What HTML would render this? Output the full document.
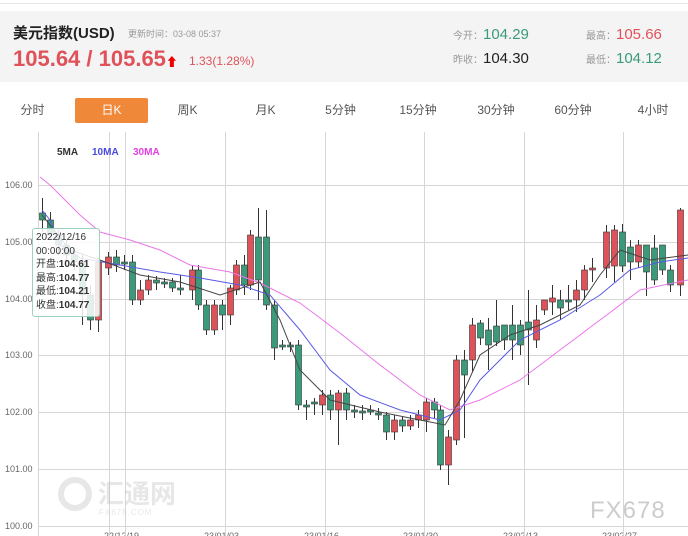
<!DOCTYPE html><html><head><meta charset="utf-8"><style>
*{margin:0;padding:0;box-sizing:border-box}
body{width:688px;height:536px;background:#fff;font-family:"Liberation Sans","Noto Sans CJK SC",sans-serif;position:relative;overflow:hidden}
.hd{position:absolute;left:0;top:11px;width:688px;height:71px;background:#f4f4f4}
.t{position:absolute;white-space:nowrap}
.tab{position:absolute;top:98px;height:25px;line-height:25px;font-size:12px;color:#555;text-align:center}
</style></head><body>
<div style="position:absolute;left:0;top:3px;width:688px;height:1px;background:#e6e6e6"></div>
<div class="hd"></div>
<div class="t" style="left:13px;top:22px;font-size:15px;font-weight:bold;color:#222">美元指数(USD)</div>
<div class="t" style="left:128px;top:27px;font-size:9px;color:#999">更新时间：03-08 05:37</div>
<div class="t" style="left:13px;top:46px;font-size:22px;font-weight:bold;color:#e0525a">105.64 / 105.65<span style="font-size:12px;color:#e00">⬆</span></div>
<div class="t" style="left:189px;top:54px;font-size:12px;color:#e0525a">1.33(1.28%)</div>
<div class="t" style="left:453px;top:26px;font-size:10px;color:#999">今开：<span style="font-size:15px;color:#3a9a7a">104.29</span></div>
<div class="t" style="left:586px;top:26px;font-size:10px;color:#999">最高：<span style="font-size:15px;color:#e0525a">105.66</span></div>
<div class="t" style="left:453px;top:50px;font-size:10px;color:#999">昨收：<span style="font-size:15px;color:#222">104.30</span></div>
<div class="t" style="left:586px;top:50px;font-size:10px;color:#999">最低：<span style="font-size:15px;color:#3a9a7a">104.12</span></div>
<div class="tab" style="left:10px;width:45px">分时</div>
<div class="tab" style="left:75px;width:73px;background:#f0883a;color:#fff;border-radius:2px">日K</div>
<div class="tab" style="left:165px;width:45px">周K</div>
<div class="tab" style="left:243px;width:45px">月K</div>
<div class="tab" style="left:318px;width:45px">5分钟</div>
<div class="tab" style="left:393px;width:50px">15分钟</div>
<div class="tab" style="left:471px;width:50px">30分钟</div>
<div class="tab" style="left:548px;width:50px">60分钟</div>
<div class="tab" style="left:628px;width:50px">4小时</div>
<svg id="c" width="688" height="536" style="position:absolute;left:0;top:0" xmlns="http://www.w3.org/2000/svg">
<g font-family="Liberation Sans,sans-serif" font-size="9" fill="#666">
<text x="5" y="188">106.00</text><text x="5" y="245">105.00</text><text x="5" y="302">104.00</text><text x="5" y="358">103.00</text><text x="5" y="415">102.00</text><text x="5" y="472">101.00</text><text x="5" y="529">100.00</text>
<text x="104" y="539">22/12/19</text><text x="204" y="539">23/01/03</text><text x="304" y="539">23/01/16</text><text x="403" y="539">23/01/30</text><text x="503" y="539">23/02/13</text><text x="602" y="539">23/02/27</text>
</g>
<g stroke="#d6d6d6" stroke-width="1">
<line x1="38" y1="185.5" x2="688" y2="185.5"/><line x1="38" y1="242.5" x2="688" y2="242.5"/><line x1="38" y1="299.5" x2="688" y2="299.5"/><line x1="38" y1="355.5" x2="688" y2="355.5"/><line x1="38" y1="412.5" x2="688" y2="412.5"/><line x1="38" y1="469.5" x2="688" y2="469.5"/><line x1="38" y1="526.5" x2="688" y2="526.5"/>
<line x1="38.5" y1="132" x2="38.5" y2="536"/><line x1="109.5" y1="132" x2="109.5" y2="536"/><line x1="125.5" y1="132" x2="125.5" y2="536"/><line x1="225.5" y1="132" x2="225.5" y2="536"/><line x1="325.5" y1="132" x2="325.5" y2="536"/><line x1="424.5" y1="132" x2="424.5" y2="536"/><line x1="524.5" y1="132" x2="524.5" y2="536"/><line x1="623.5" y1="132" x2="623.5" y2="536"/>
</g>
<g font-family="Liberation Sans,sans-serif" font-size="10" font-weight="bold"><text x="57" y="155" fill="#333">5MA</text><text x="92" y="155" fill="#4a4ae0">10MA</text><text x="133" y="155" fill="#e040e0">30MA</text></g>
<g id="k"></g>
<polyline fill="none" stroke="#e878e8" stroke-width="1" points="40,177 50,185 60,195 80,215 100,232 130,240 160,250 190,265 230,272 260,283 300,303 340,333 380,365 420,395 450,410 480,400 520,380 560,350 600,320 640,290 688,280"/>
<polyline fill="none" stroke="#5a5ae6" stroke-width="1" points="42,210 50,220 60,245 80,258 120,265 160,272 200,278 240,285 270,295 300,330 330,370 360,395 400,410 440,420 460,410 480,380 520,340 560,320 600,295 630,270 660,262 688,258"/>
<polyline fill="none" stroke="#444" stroke-width="1" points="42,215 70,250 100,260 140,275 180,282 220,295 260,282 280,320 300,370 330,400 380,412 420,420 445,425 460,400 480,355 510,335 540,325 580,305 600,275 620,250 650,260 688,255"/>
<g opacity="0.35" fill="#bbb" font-family="Liberation Sans,Noto Sans CJK SC,sans-serif">
<circle cx="75" cy="494" r="14" fill="none" stroke="#bbb" stroke-width="6"/>
<text x="98" y="503" font-size="26" font-weight="bold">汇通网</text>
<text x="99" y="515" font-size="8" letter-spacing="1">FX678.COM</text>
</g>
<text x="590" y="518" font-family="Liberation Sans,sans-serif" font-size="24" fill="#ccc" letter-spacing="1">FX678</text>
</svg>
<div style="position:absolute;left:32px;top:228px;width:68px;height:89px;border:1px solid #9fd0c0;border-radius:3px;background:rgba(255,255,255,0.85);font-size:10px;line-height:13.5px;color:#333;padding:2px 3px">2022/12/16<br>00:00:00<br>开盘:<b>104.61</b><br>最高:<b>104.77</b><br>最低:<b>104.21</b><br>收盘:<b>104.77</b></div>
<script>
var c=[[42,213,220,198,232],[50,220,235,212,240],[58,235,245,230,255],[66,245,255,240,262],[74,255,262,248,270],[82,262,295,255,325],[90,295,320,285,330],[98,320,262,258,332],[108,268,257,252,275],[116,257,265,250,272],[124,262,262,255,270],[132,262,300,255,305],[140,300,290,280,305],[148,290,280,275,295],[156,280,283,276,290],[164,282,282,278,288],[172,282,288,278,292],[180,288,290,275,295],[192,290,270,265,300],[198,270,305,265,310],[206,305,330,300,335],[214,330,305,300,335],[222,305,315,300,330],[230,315,288,285,325],[236,290,265,260,295],[244,265,285,255,295],[250,285,235,230,290],[258,237,280,208,300],[266,237,305,210,310],[274,305,348,300,360],[282,345,345,340,350],[290,345,345,342,352],[298,345,405,340,410],[306,405,405,400,420],[314,402,402,398,415],[322,405,395,390,415],[330,395,410,390,420],[338,410,393,390,445],[346,393,410,388,420],[354,410,411,405,418],[362,411,412,405,420],[370,410,412,405,415],[378,413,413,408,420],[386,415,432,412,440],[394,432,420,415,440],[402,420,426,416,432],[410,426,420,415,430],[418,420,415,410,428],[426,420,402,398,432],[434,402,410,398,418],[440,410,465,405,470],[448,465,437,430,485],[456,440,360,355,445],[464,360,375,350,438],[472,360,325,318,372],[480,323,338,320,345],[488,330,345,318,370],[496,326,342,300,346],[504,325,340,325,350],[512,325,340,305,360],[520,325,345,320,355],[528,322,330,290,385],[536,340,320,305,348],[544,310,300,300,315],[552,302,298,285,315],[560,300,308,290,320],[568,300,302,285,310],[576,300,290,280,312],[584,290,270,265,300],[592,270,268,258,282],[606,268,232,225,278],[614,266,230,225,282],[622,232,266,224,272],[630,247,262,240,280],[638,262,245,240,268],[646,245,272,245,296],[654,248,280,235,285],[662,245,270,245,275],[670,270,285,265,292],[680,285,210,208,296]];
var g=document.getElementById('k'),s='';
c.forEach(function(d){var x=d[0],o=d[1],cl=d[2],up=cl<o,t=Math.min(o,cl),h=Math.max(2,Math.abs(o-cl));
s+='<line x1="'+(x+.5)+'" y1="'+d[3]+'" x2="'+(x+.5)+'" y2="'+d[4]+'" stroke="#333"/>';
s+='<rect x="'+(x-2.5)+'" y="'+t+'" width="6" height="'+h+'" fill="'+(up?'#e0525a':'#3a9a7a')+'" stroke="#333" stroke-width=".6"/>';});
g.innerHTML=s;
</script>
</body></html>
